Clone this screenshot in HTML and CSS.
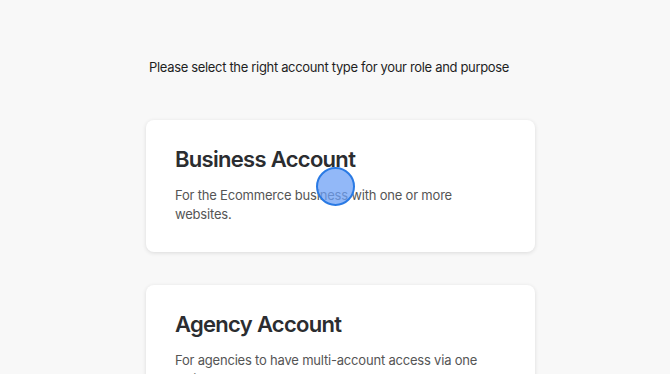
FILE: index.html
```html
<!DOCTYPE html>
<html lang="en">
<head>
    <meta charset="UTF-8">
    <meta name="viewport" content="width=device-width, initial-scale=1.0">
    <title>Select account type</title>
    <link rel="stylesheet" href="styles.css">
</head>
<body>

<div class="page">
    <p class="intro">Please select the right account type for your role and purpose</p>

    <div class="card">
        <h2>Business Account</h2>
        <p>For the Ecommerce business with one or more websites.</p>
    </div>

    <div class="card">
        <h2>Agency Account</h2>
        <p>For agencies to have multi-account access via one login.</p>
    </div>
</div>

<div class="cursor"></div>

</body>
</html>
```

FILE: styles.css
```css
body {
    font-family: Inter, "Noto Sans", sans-serif;
    background-color: #f8f8f8;
    color: #222;
    margin: 0;
    padding: 0;
}

.page {
    width: 389px;
    margin-left: 146px;
    padding-top: 59px;
}

.intro {
    font-size: 13px;
    letter-spacing: -0.33px;
    margin: 0 0 45px 3px;
    color: #1f1f1f;
}

.card {
    background-color: #fff;
    border-radius: 8px;
    box-shadow: 0 1px 4px rgba(0, 0, 0, 0.12);
    padding: 26px 29px 28px;
    margin-bottom: 33px;
}

.card h2 {
    font-size: 22px;
    font-weight: 600;
    color: #2b2d30;
    margin: 0 0 14px;
    letter-spacing: -0.7px;
}

.card p {
    font-size: 13px;
    line-height: 19px;
    letter-spacing: -0.2px;
    color: #555;
    margin: 0;
    max-width: 305px;
}

/* click marker from the screen recording */
.cursor {
    position: absolute;
    left: 316px;
    top: 167px;
    width: 35px;
    height: 35px;
    border-radius: 50%;
    background-color: rgba(110, 160, 245, 0.75);
    border: 2px solid #2a7ae4;
}
```
